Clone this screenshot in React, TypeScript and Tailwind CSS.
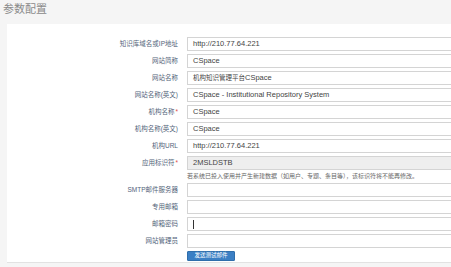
const rows = [
  { label: "知识库域名或IP地址", value: "http://210.77.64.221" },
  { label: "网站简称", value: "CSpace" },
  { label: "网站名称", value: "CSpace", prefix: "机构知识管理平台" },
  { label: "网站名称(英文)", value: "CSpace - Institutional Repository System" },
  { label: "机构名称", value: "CSpace", required: true },
  { label: "机构名称(英文)", value: "CSpace" },
  { label: "机构URL", value: "http://210.77.64.221" },
  { label: "应用标识符", value: "2MSLDSTB", required: true, disabled: true },
];

const mailRows = [
  { label: "SMTP邮件服务器", value: "" },
  { label: "专用邮箱", value: "" },
  { label: "邮箱密码", value: "", cursor: true },
  { label: "网站管理员", value: "" },
];

const font = "font-['Liberation_Sans','Noto_Sans_CJK_SC',sans-serif]";

type Row = {
  label: string;
  value: string;
  prefix?: string;
  required?: boolean;
  disabled?: boolean;
  cursor?: boolean;
};

const FieldRow = ({ row }: { row: Row }) => (
  <div className="flex items-start h-[17px]">
    <div className="w-[171px] shrink-0 h-[14px] flex items-center justify-end text-[6.5px] leading-none text-[#53647a]">
      {row.label}
      {row.required && <span className="text-[#e04848] ml-[1px]">*</span>}
    </div>
    <div
      className={`ml-[9px] flex-1 h-[14px] border border-[#d4d4d4] flex items-center pl-[5px] text-[7.5px] text-[#444] ${
        row.disabled ? "bg-[#eeeeee]" : "bg-white"
      }`}
    >
      {row.cursor && <span className="w-[1px] h-[9px] bg-[#333]" />}
      {row.prefix && <span className="text-[6.5px]">{row.prefix}</span>}
      {row.value}
    </div>
  </div>
);

export default function App() {
  return (
    <div className={`w-[451px] h-[267px] bg-[#f5f5f5] overflow-hidden ${font}`}>
      <div className="h-[24px] pl-[3px] pt-[2px] text-[11px] leading-[14px] text-[#8a8a8a]">参数配置</div>
      <div className="ml-[7px] w-[470px] h-[239px] bg-white border-b border-[#e2e2e2] pt-[13px]">
        {rows.map((r) => (
          <FieldRow key={r.label} row={r} />
        ))}
        <div className="ml-[180px] h-[10px] -mt-[2px] pb-[1px] flex items-center text-[6px] leading-none text-[#666] whitespace-nowrap">
          若系统已投入使用并产生新建数据（如用户、专题、条目等），该标识符将不能再修改。
        </div>
        <div className="mt-[2px]">
          {mailRows.map((r) => (
            <FieldRow key={r.label} row={r} />
          ))}
        </div>
        <div className="ml-[180px]">
          <button className="w-[48px] h-[10px] bg-[#3b7fc4] border border-[#2f6eab] rounded-[1px] text-white text-[5.5px] leading-none flex items-center justify-center">
            发送测试邮件
          </button>
        </div>
      </div>
    </div>
  );
}
